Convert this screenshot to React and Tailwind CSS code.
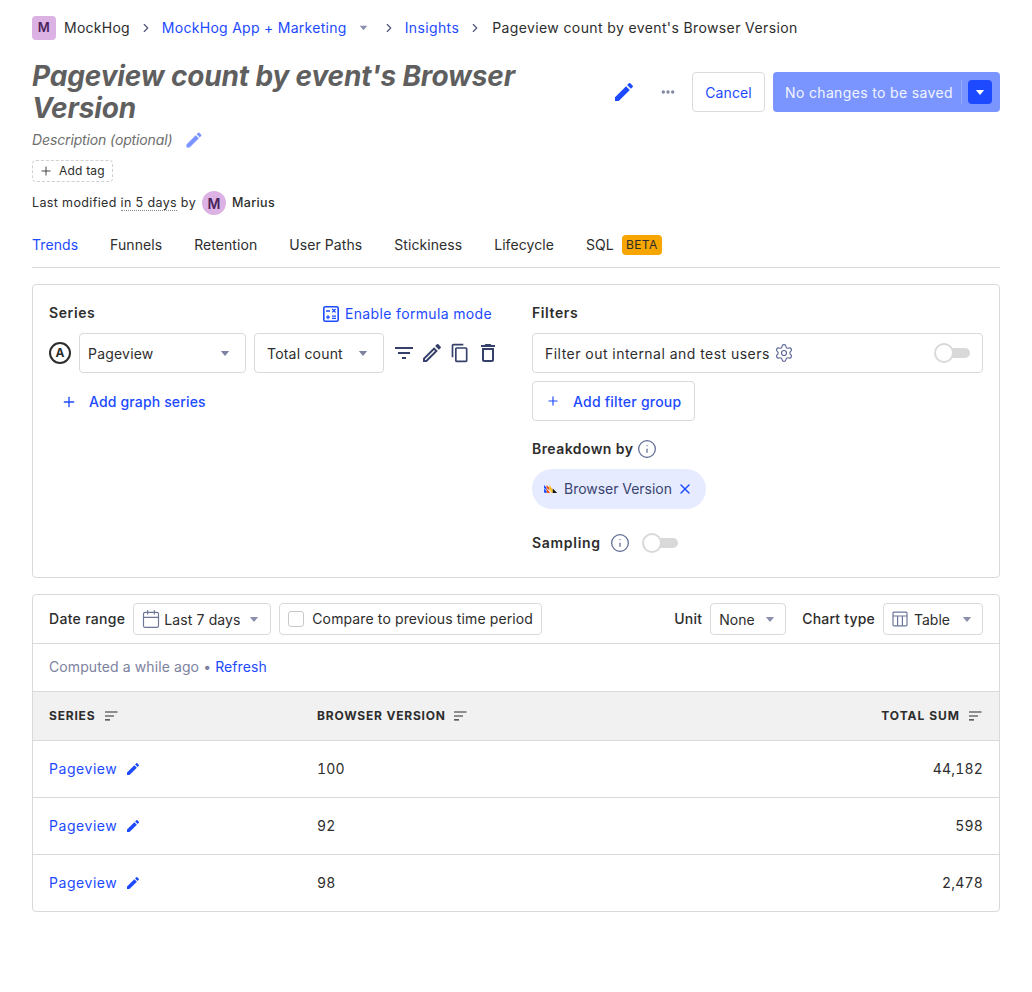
import React from "react";
import { ChevronRight, Plus, Settings, Info, Calendar, X, MoreHorizontal } from "lucide-react";

const Pencil = ({ className }) => (
  <svg viewBox="0 0 24 24" fill="currentColor" className={className}>
    <path d="M3 17.25V21h3.75L17.81 9.94l-3.75-3.75L3 17.25zM20.71 7.04c.39-.39.39-1.02 0-1.41l-2.34-2.34c-.39-.39-1.02-.39-1.41 0l-1.83 1.83 3.75 3.75 1.83-1.83z" />
  </svg>
);
const PencilOutline = ({ className }) => (
  <svg viewBox="0 0 24 24" fill="currentColor" className={className}>
    <path d="M3 17.25V21h3.75L17.81 9.94l-3.75-3.75L3 17.25zM5.92 19H5v-.92l9.06-9.06.92.92L5.92 19zM20.71 7.04c.39-.39.39-1.02 0-1.41l-2.34-2.34c-.39-.39-1.02-.39-1.41 0l-1.83 1.83 3.75 3.75 1.83-1.83z" />
  </svg>
);
const Caret = ({ className }) => (
  <svg viewBox="0 0 12 8" fill="currentColor" className={className}>
    <path d="M1 1h10L6 7z" />
  </svg>
);
const FilterIcon = ({ className }) => (
  <svg viewBox="0 0 24 24" fill="currentColor" className={className}>
    <path d="M10 18h4v-2h-4v2zM3 6v2h18V6H3zm3 7h12v-2H6v2z" />
  </svg>
);
const Copy = ({ className }) => (
  <svg viewBox="0 0 24 24" fill="currentColor" className={className}>
    <path d="M16 1H4c-1.1 0-2 .9-2 2v14h2V3h12V1zm3 4H8c-1.1 0-2 .9-2 2v14c0 1.1.9 2 2 2h11c1.1 0 2-.9 2-2V7c0-1.1-.9-2-2-2zm0 16H8V7h11v14z" />
  </svg>
);
const Trash = ({ className }) => (
  <svg viewBox="0 0 24 24" fill="currentColor" className={className}>
    <path d="M6 19c0 1.1.9 2 2 2h8c1.1 0 2-.9 2-2V7H6v12zM8 9h8v10H8V9zm7.5-5l-1-1h-5l-1 1H5v2h14V4z" />
  </svg>
);
const Sort = ({ className }) => (
  <svg viewBox="0 0 14 12" fill="currentColor" className={className}>
    <path d="M1 1.5h12.5v1.1H1zM1 5.4h9v1.1H1zM1 9.3h5v1.1H1z" />
  </svg>
);
const Calc = ({ className }) => (
  <svg viewBox="0 0 16 16" fill="none" stroke="currentColor" className={className}>
    <rect x="0.8" y="0.8" width="14.4" height="14.4" rx="1.5" strokeWidth="1.6" />
    <path d="M3 5h4M5 9.2v4M3 11.2h4M9.2 3l3.4 3.4M12.6 3 9.2 6.4M9 10.2h4M9 12.4h4" strokeWidth="1.3" />
  </svg>
);
const TableIcon = ({ className }) => (
  <svg viewBox="0 0 16 16" fill="none" stroke="currentColor" strokeWidth="1.2" className={className}>
    <rect x="1" y="1.2" width="14" height="13.6" rx="1" />
    <path d="M1 5h14M5.6 5v9.8M10.4 5v9.8" />
  </svg>
);
const PropLogo = () => (
  <svg viewBox="0 0 16 9" className="w-[14px] h-[8px] shrink-0">
    <path d="M0 0l3 3v3L0 3z" fill="#1d4aff" />
    <path d="M0 4l3 3v2H1L0 8z" fill="#1d4aff" />
    <path d="M3 0l3 3v3L3 3z" fill="#f54e00" />
    <path d="M3 4l4 5H4L3 8z" fill="#f54e00" />
    <path d="M6 0l4 5v4H9L6 5z" fill="#f9bd2b" />
    <path d="M10 4l5 5h-5z" fill="#151515" />
  </svg>
);
const Toggle = () => (
  <div className="relative w-[36px] h-[20px] shrink-0">
    <div className="absolute right-0 top-[5px] w-[30px] h-[10px] rounded-full bg-[#d9d9d9]" />
    <div className="absolute left-0 top-0 w-[20px] h-[20px] rounded-full bg-white border-2 border-[#d9d9d9]" />
  </div>
);

const blue = "text-[#1d4aff]";
const tabs = ["Funnels", "Retention", "User Paths", "Stickiness", "Lifecycle"];
const rows = [
  ["100", "44,182"],
  ["92", "598"],
  ["98", "2,478"],
];

export default function App() {
  return (
    <div className="px-8 pt-4 pb-20 bg-white text-[14px] text-[#2d2d2d] font-['Inter',sans-serif] min-h-[992px]">
      {/* breadcrumbs */}
      <div className="flex items-center h-6 tracking-[0.38px]">
        <div className="w-6 h-6 rounded bg-[#dcb1e3] text-[#49235c] font-semibold text-[13px] flex items-center justify-center">M</div>
        <span className="ml-2 -mt-[2px] tracking-[0.25px]">MockHog</span>
        <ChevronRight className="w-[14px] h-[14px] ml-[9px] text-[#50577a]" />
        <span className={`ml-[9px] -mt-[2px] tracking-[0.28px] ${blue}`}>MockHog App + Marketing</span>
        <Caret className="w-[9px] h-[6px] ml-[12px] text-[#8a90ad]" />
        <ChevronRight className="w-[14px] h-[14px] ml-[14px] text-[#50577a]" />
        <span className={`ml-[9px] -mt-[2px] ${blue}`}>Insights</span>
        <ChevronRight className="w-[14px] h-[14px] ml-[9px] text-[#50577a]" />
        <span className="ml-[10px] -mt-[2px]">Pageview count by event's Browser Version</span>
      </div>

      {/* header */}
      <div className="flex items-start justify-between mt-[20px]">
        <h1 className="w-[510px] text-[28px] leading-[32px] font-bold italic text-[#5f5f5f] tracking-[-0.15px]">
          Pageview count by event's Browser Version
        </h1>
        <div className="flex items-center mt-3 h-10">
          <Pencil className={`w-6 h-6 ${blue} mr-[24px]`} />
          <MoreHorizontal className="w-4 h-4 text-[#7c82a0] mr-4" strokeWidth={3} />
          <div className={`h-10 w-[73px] border border-[#dcdcdc] rounded flex items-center justify-center ${blue} tracking-[0.1px]`}>Cancel</div>
          <div className="ml-2 h-10 w-[227px] rounded bg-[#7a95ff] text-[#fff] flex items-center pl-3 pr-2">
            <span className="tracking-[0.35px] text-white/90">No changes to be saved</span>
            <div className="ml-2 w-px h-6 bg-white/20" />
            <div className="ml-auto w-6 h-6 rounded bg-[#1d4aff] flex items-center justify-center">
              <Caret className="w-[10px] h-[7px] text-white" />
            </div>
          </div>
        </div>
      </div>

      <div className="flex items-center mt-[4px] h-6 italic text-[#6e6e6e] tracking-[-0.13px]">
        <span className="-mt-[2px]">Description (optional)</span>
        <Pencil className="w-5 h-5 ml-[12px] text-[#7a95ff]" />
      </div>

      <div className="mt-[8px] w-[81px] h-[22px] border border-dashed border-[#d0d0d0] rounded flex items-center pl-[6px] text-[12px] tracking-[0.2px]">
        <Plus className="w-[14px] h-[14px] mr-[6px]" strokeWidth={1.5} />
        Add tag
      </div>

      <div className="flex items-center mt-[9px] h-6 text-[12.5px] tracking-[0.36px]">
        <span>Last modified&nbsp;</span>
        <span className="border-b border-dotted border-[#8a8a8a] leading-[15px]">in 5 days</span>
        <span>&nbsp;by</span>
        <div className="ml-[6px] w-6 h-6 rounded-full bg-[#dcb1e3] text-[#49235c] font-semibold text-[14px] flex items-center justify-center">M</div>
        <span className="ml-[6px] font-medium">Marius</span>
      </div>

      {/* tabs */}
      <div className="flex items-center h-[43px] mt-[10px] border-b border-[#d9d9d9] pb-[3px] tracking-[0.07px]">
        <span className={`${blue} mr-8`}>Trends</span>
        {tabs.map((t) => (
          <span key={t} className="mr-8">{t}</span>
        ))}
        <span>SQL</span>
        <span className="ml-2 w-10 justify-center h-5 rounded bg-[#f7a501] text-[12px] tracking-[0.4px] flex items-center">BETA</span>
      </div>

      {/* query card */}
      <div className="mt-4 h-[294px] border border-[#d9d9d9] rounded p-4 grid grid-cols-2 gap-8">
        <div>
          <div className="flex items-center justify-between h-[24px] pt-[1px] mb-[8px] pr-2">
            <span className="font-semibold tracking-[0.6px] -mt-[2px]">Series</span>
            <span className={`flex items-center ${blue} tracking-[0.35px]`}>
              <Calc className="w-4 h-4 mr-[6px]" />
              Enable formula mode
            </span>
          </div>
          <div className="flex items-center">
            <div className="w-[22px] h-[22px] rounded-full border-2 border-[#2d2d2d] flex items-center justify-center text-[12px] font-bold">A</div>
            <div className="ml-2 w-[167px] h-10 border border-[#d9d9d9] rounded flex items-center pl-2 pr-[15px] justify-between tracking-[0.2px]">
              Pageview
              <Caret className="w-[10px] h-[7px] text-[#7c82a0]" />
            </div>
            <div className="ml-2 w-[130px] h-10 border border-[#d9d9d9] rounded flex items-center pl-3 pr-[15px] justify-between tracking-[0.2px]">
              Total count
              <Caret className="w-[10px] h-[7px] text-[#7c82a0]" />
            </div>
            <div className="flex items-center ml-[8px] text-[#35416b]">
              <FilterIcon className="w-6 h-6" />
              <PencilOutline className="w-6 h-6 ml-[4px]" />
              <div className="w-6 h-6 ml-[4px] flex items-center justify-center"><Copy className="w-5 h-5" /></div>
              <Trash className="w-6 h-6 ml-[4px]" />
            </div>
          </div>
          <div className={`flex items-center mt-[8px] h-10 pl-[12px] pt-[1px] ${blue} font-medium tracking-[0.15px]`}>
            <Plus className="w-[16px] h-[16px] mr-[12px]" strokeWidth={2} />
            Add graph series
          </div>
        </div>

        <div>
          <div className="h-[24px] mb-[8px] font-semibold flex items-center tracking-[0.6px] pb-[1px]">Filters</div>
          <div className="h-10 border border-[#d9d9d9] rounded flex items-center pl-3 pr-3">
            <span className="tracking-[0.46px]">Filter out internal and test users</span>
            <Settings className="w-5 h-5 ml-[4px] text-[#5f6a94]" strokeWidth={1.4} />
            <div className="ml-auto"><Toggle /></div>
          </div>
          <div className={`mt-2 w-[163px] h-10 border border-[#d9d9d9] rounded flex items-center pl-[13px] ${blue} font-medium tracking-[0.22px]`}>
            <Plus className="w-[14px] h-[14px] mr-[13px]" strokeWidth={2} />
            Add filter group
          </div>
          <div className="flex items-center mt-[16px] h-[24px]">
            <span className="font-semibold tracking-[0.43px] -mt-[2px]">Breakdown by</span>
            <Info className="w-5 h-5 ml-[4px] text-[#5f6a94]" strokeWidth={1.5} />
          </div>
          <div className="mt-2 w-[174px] h-10 rounded-full bg-[#e6ebff] flex items-center pl-[12px] text-[#3a4470]">
            <PropLogo />
            <span className="ml-[6px] tracking-[-0.03px] -mt-[2px]">Browser Version</span>
            <X className={`w-4 h-4 ml-[5px] ${blue}`} strokeWidth={2} />
          </div>
          <div className="flex items-center mt-[24px] h-[20px]">
            <span className="font-semibold tracking-[0.7px] -mt-[2px]">Sampling</span>
            <Info className="w-5 h-5 ml-[9px] text-[#5f6a94]" strokeWidth={1.5} />
            <div className="ml-[12px]"><Toggle /></div>
          </div>
        </div>
      </div>

      {/* results card */}
      <div className="mt-4 border border-[#d9d9d9] rounded overflow-hidden">
        <div className="h-[49px] flex items-center px-4 border-b border-[#d9d9d9]">
          <span className="font-medium tracking-[0.3px] -mt-[2px]">Date range</span>
          <div className="ml-2 w-[138px] h-8 border border-[#d9d9d9] rounded flex items-center pl-2 pr-[11px]">
            <Calendar className="w-5 h-5 -ml-px text-[#6b7699]" strokeWidth={1.4} />
            <span className="ml-[3px] tracking-[0.12px]">Last 7 days</span>
            <Caret className="ml-auto w-[10px] h-[7px] text-[#8a90ad]" />
          </div>
          <div className="ml-2 w-[263px] h-8 border border-[#d9d9d9] rounded flex items-center pl-2">
            <div className="w-4 h-4 border border-[#c9c9c9] rounded-[3px]" />
            <span className="ml-2 tracking-[0.12px] -mt-[2px]">Compare to previous time period</span>
          </div>
          <div className="ml-auto flex items-center">
            <span className="font-medium tracking-[0.25px] -mt-[2px]">Unit</span>
            <div className="ml-2 w-[76px] h-8 border border-[#d9d9d9] rounded flex items-center pl-2 pr-[10px] justify-between">
              None
              <Caret className="w-[10px] h-[7px] text-[#8a90ad]" />
            </div>
            <span className="ml-4 font-medium tracking-[0.2px] -mt-[2px]">Chart type</span>
            <div className="ml-2 w-[100px] h-8 border border-[#d9d9d9] rounded flex items-center pl-2 pr-[10px]">
              <TableIcon className="w-4 h-4 text-[#6b7699]" />
              <span className="ml-[6px]">Table</span>
              <Caret className="ml-auto w-[10px] h-[7px] text-[#8a90ad]" />
            </div>
          </div>
        </div>
        <div className="h-[48px] flex items-center px-4 border-b border-[#d9d9d9] text-[#7c82a0] tracking-[0.1px]">
          <span className="-mt-[2px]">Computed a while ago&nbsp;•&nbsp;<span className={blue}>Refresh</span></span>
        </div>
        <div className="h-[49px] flex items-center px-4 bg-[#f1f1f1] border-b border-[#d9d9d9] text-[12px] font-bold tracking-[0.8px]">
          <div className="w-[268px] flex items-center">SERIES<Sort className="w-[14px] h-[12px] ml-[9px]" /></div>
          <div className="flex items-center">BROWSER VERSION<Sort className="w-[14px] h-[12px] ml-[7px]" /></div>
          <div className="ml-auto flex items-center tracking-[1px]">TOTAL SUM<Sort className="w-[14px] h-[12px] ml-[8px] mr-px" /></div>
        </div>
        {rows.map(([version, total], i) => (
          <div key={version} className={`flex items-center px-4 ${i < 2 ? "h-[57px] border-b border-[#d9d9d9]" : "h-[56px]"}`}>
            <div className="w-[268px] flex items-center">
              <span className={`${blue} tracking-[0.55px] -mt-[2px]`}>Pageview</span>
              <Pencil className={`w-4 h-4 ml-[8px] ${blue}`} />
            </div>
            <div className="tracking-[0.2px] tabular-nums -mt-[2px]">{version}</div>
            <div className="ml-auto tracking-[0.2px] tabular-nums -mt-[2px]">{total}</div>
          </div>
        ))}
      </div>
    </div>
  );
}
